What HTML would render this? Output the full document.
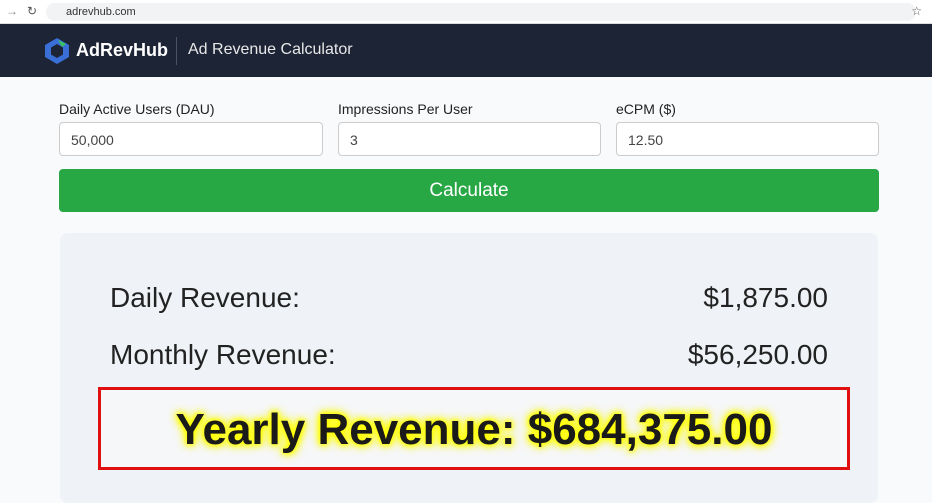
<!DOCTYPE html>
<html><head><style>
*{box-sizing:border-box;margin:0;padding:0}
body{width:932px;height:490px;overflow:hidden;background:#f9fafb;font-family:"Liberation Sans",sans-serif;position:relative}
.bar{position:absolute;top:0;left:0;width:932px;height:24px;background:#fff;border-bottom:1px solid #ddd}
.url{position:absolute;left:46px;top:3px;width:870px;height:18px;background:#f1f3f4;border-radius:9px;font-size:11px;color:#333;padding:3px 0 0 20px}
.hdr{position:absolute;top:24px;left:0;width:932px;height:53px;background:#1c2436}
.lbl{position:absolute;top:101px;font-size:14px;color:#222}
.inp{position:absolute;top:122px;height:34px;border:1px solid #ccc;border-radius:4px;background:#fff;font-size:14px;color:#444;padding:9px 11px}
.btn{position:absolute;left:59px;top:169px;width:820px;height:43px;background:#28a745;border-radius:4px;color:#fff;font-size:19px;text-align:center;line-height:43px}
.card{position:absolute;left:60px;top:233px;width:818px;height:270px;background:#eff3f7;border-radius:8px}
.row{position:absolute;left:110px;width:718px;font-size:28px;color:#222;display:flex;justify-content:space-between}
.box{position:absolute;left:98px;top:387px;width:752px;height:83px;border:3px solid #e01010;background:#f6f7f9;text-align:center}
.box span{display:inline-block;margin-top:15px;font-size:44px;font-weight:bold;color:#1a1a1a;text-shadow:0 0 8px #ff0,0 0 8px #ff0,0 0 12px #ff0,0 0 4px #ff0}
</style></head><body>
<div class="bar"><span style="position:absolute;left:6px;top:4px;font-size:12px;color:#888">→</span><span style="position:absolute;left:27px;top:4px;font-size:12px;color:#555">↻</span><div class="url">adrevhub.com</div><span style="position:absolute;right:10px;top:4px;font-size:12px;color:#555">☆</span></div>
<div class="hdr">
<svg style="position:absolute;left:44px;top:13px" width="26" height="28" viewBox="0 0 26 28"><polygon points="13,1 25,8 25,20 13,27 1,20 1,8" fill="#3a6fd8"/><polygon points="13,7 19,10.5 19,17.5 13,21 7,17.5 7,10.5" fill="#1c2436"/><path d="M14 3 L22 7 L18 10 Z" fill="#3cc45c"/></svg>
<span style="position:absolute;left:76px;top:16px;color:#fff;font-size:18px;font-weight:bold">AdRevHub</span>
<div style="position:absolute;left:176px;top:13px;width:1px;height:28px;background:#4a5264"></div>
<span style="position:absolute;left:188px;top:17px;color:#e8e8e8;font-size:16px">Ad Revenue Calculator</span>
</div>
<div class="lbl" style="left:59px">Daily Active Users (DAU)</div>
<div class="lbl" style="left:338px">Impressions Per User</div>
<div class="lbl" style="left:616px">eCPM ($)</div>
<div class="inp" style="left:59px;width:264px">50,000</div>
<div class="inp" style="left:338px;width:263px">3</div>
<div class="inp" style="left:616px;width:263px">12.50</div>
<div class="btn">Calculate</div>
<div class="card"></div>
<div class="row" style="top:282px"><span>Daily Revenue:</span><span>$1,875.00</span></div>
<div class="row" style="top:339px"><span>Monthly Revenue:</span><span>$56,250.00</span></div>
<div class="box"><span>Yearly Revenue: $684,375.00</span></div>
</body></html>
